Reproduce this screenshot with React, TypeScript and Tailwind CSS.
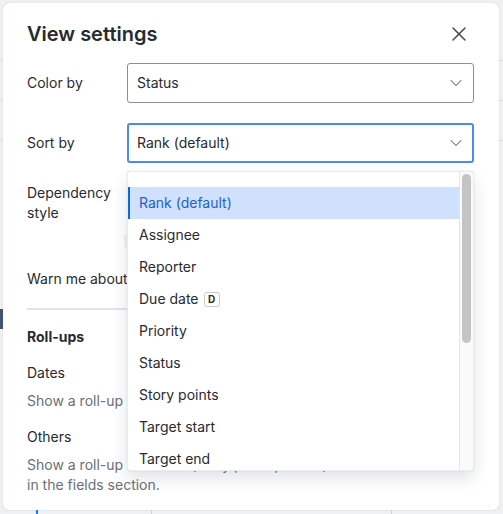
import { ChevronDown, X } from "lucide-react";

const sortOptions = [
  "Rank (default)",
  "Assignee",
  "Reporter",
  "Due date",
  "Priority",
  "Status",
  "Story points",
  "Target start",
  "Target end",
];

function Backdrop() {
  return (
    <div className="flex h-[514px] w-[503px] flex-col bg-[#eff0f2]">
      <div className="h-[61px] shrink-0 border-b border-[#dcdee2]" />
      <div className="h-10 shrink-0 border-b border-[#dcdee2]" />
      <div className="h-10 shrink-0 border-b border-[#dcdee2]" />
      <div className="flex-1">
        <div className="mt-[168px] h-5 w-[3px] bg-[#44546f]" />
      </div>
      <div className="flex h-6 shrink-0">
        <div className="ml-[36px] w-[2px] bg-[#1d7afc]" />
        <div className="ml-[113px] w-px bg-[#cfd1d5]" />
        <div className="ml-[239px] w-px bg-[#cfd1d5]" />
      </div>
    </div>
  );
}

function SelectBox({ value, focused }: { value: string; focused?: boolean }) {
  return (
    <div
      className={
        focused
          ? "flex h-10 flex-1 items-center justify-between rounded-[3px] border-2 border-[#4a8de8] bg-white pl-2 pr-[6px]"
          : "flex h-10 flex-1 items-center justify-between rounded-[3px] border border-[#8c8f97] bg-white pl-[9px] pr-[7px]"
      }
    >
      <span className="text-sm text-[#292a2e]">{value}</span>
      <ChevronDown size={20} strokeWidth={1.25} className="text-[#626f86]" />
    </div>
  );
}

function SortMenu() {
  return (
    <div className="absolute left-[124px] top-[168px] flex h-[300px] w-[347px] overflow-hidden rounded-[3px] border border-[#ececec] bg-white shadow-[0_8px_16px_rgba(9,30,66,0.12),0_0_1px_rgba(9,30,66,0.2)]">
      <ul className="flex-1 pt-[15px]">
        {sortOptions.map((option, index) => (
          <li
            key={option}
            className={
              index === 0
                ? "flex h-8 items-center bg-[#cfe1fd] pl-[11px] text-sm text-[#1f5fcc] shadow-[inset_2px_0_0_#0c66e4]"
                : "flex h-8 items-center pl-[11px] text-sm text-[#292a2e]"
            }
          >
            {option}
            {option === "Due date" ? (
              <span className="ml-[5px] flex h-[15px] w-4 items-center justify-center rounded-[3px] border border-[#c7c9ce] text-[10px] font-bold text-[#292a2e]">
                D
              </span>
            ) : null}
          </li>
        ))}
      </ul>
      <div className="w-[14px] shrink-0 border-l border-[#e6e6e6] bg-[#fafafa] pl-[2px] pt-[2px]">
        <div className="h-[169px] w-[9px] rounded-full bg-[#c4c4c4]" />
      </div>
    </div>
  );
}

export default function App() {
  return (
    <div className="relative h-[514px] w-[503px] overflow-hidden font-['Inter','Noto_Sans',sans-serif]">
      <Backdrop />
      <div className="absolute left-[3px] top-[3px] h-[507px] w-[496px] rounded-[6px] bg-white pl-6 pr-[25px] pt-[17px] shadow-[0_0_1px_rgba(9,30,66,0.3)]">
        <div className="flex h-7 items-center justify-between">
          <h1 className="text-[20px] font-semibold leading-7 text-[#292a2e]">View settings</h1>
          <X size={24} strokeWidth={1.5} className="mr-[3px] text-[#44474f]" />
        </div>

        <div className="mt-[15px] flex items-center">
          <span className="w-[100px] text-sm text-[#292a2e]">Color by</span>
          <SelectBox value="Status" />
        </div>

        <div className="mt-5 flex items-center">
          <span className="w-[100px] text-sm text-[#292a2e]">Sort by</span>
          <SelectBox value="Rank (default)" focused />
        </div>

        <div className="mt-5 flex h-[66px] items-start">
          <span className="w-[100px] text-sm leading-5 text-[#292a2e]">
            Dependency
            <br />
            style
          </span>
          <div className="-ml-[3px] mt-[51px] h-[14px] w-[120px] rounded-[3px] bg-[#f1f2f4]" />
        </div>

        <div className="mt-5 flex h-5 items-center">
          <span className="text-sm leading-5 text-[#292a2e]">Warn me about dependency issues</span>
        </div>

        <div className="mt-[19px] h-[2px] bg-[#e2e3e6]" />

        <p className="mt-[17px] text-sm font-bold leading-5 text-[#292a2e]">Roll-ups</p>
        <p className="mt-4 text-sm leading-5 text-[#292a2e]">Dates</p>
        <p className="mt-2 text-sm leading-5 text-[#6b6e76]">Show a roll-up of dates on parent items.</p>
        <p className="mt-4 text-sm leading-5 text-[#292a2e]">Others</p>
        <p className="mt-2 text-sm leading-5 text-[#6b6e76]">
          Show a roll-up of values (story points, status)
          <br />
          in the fields section.
        </p>

        <SortMenu />
      </div>
    </div>
  );
}
